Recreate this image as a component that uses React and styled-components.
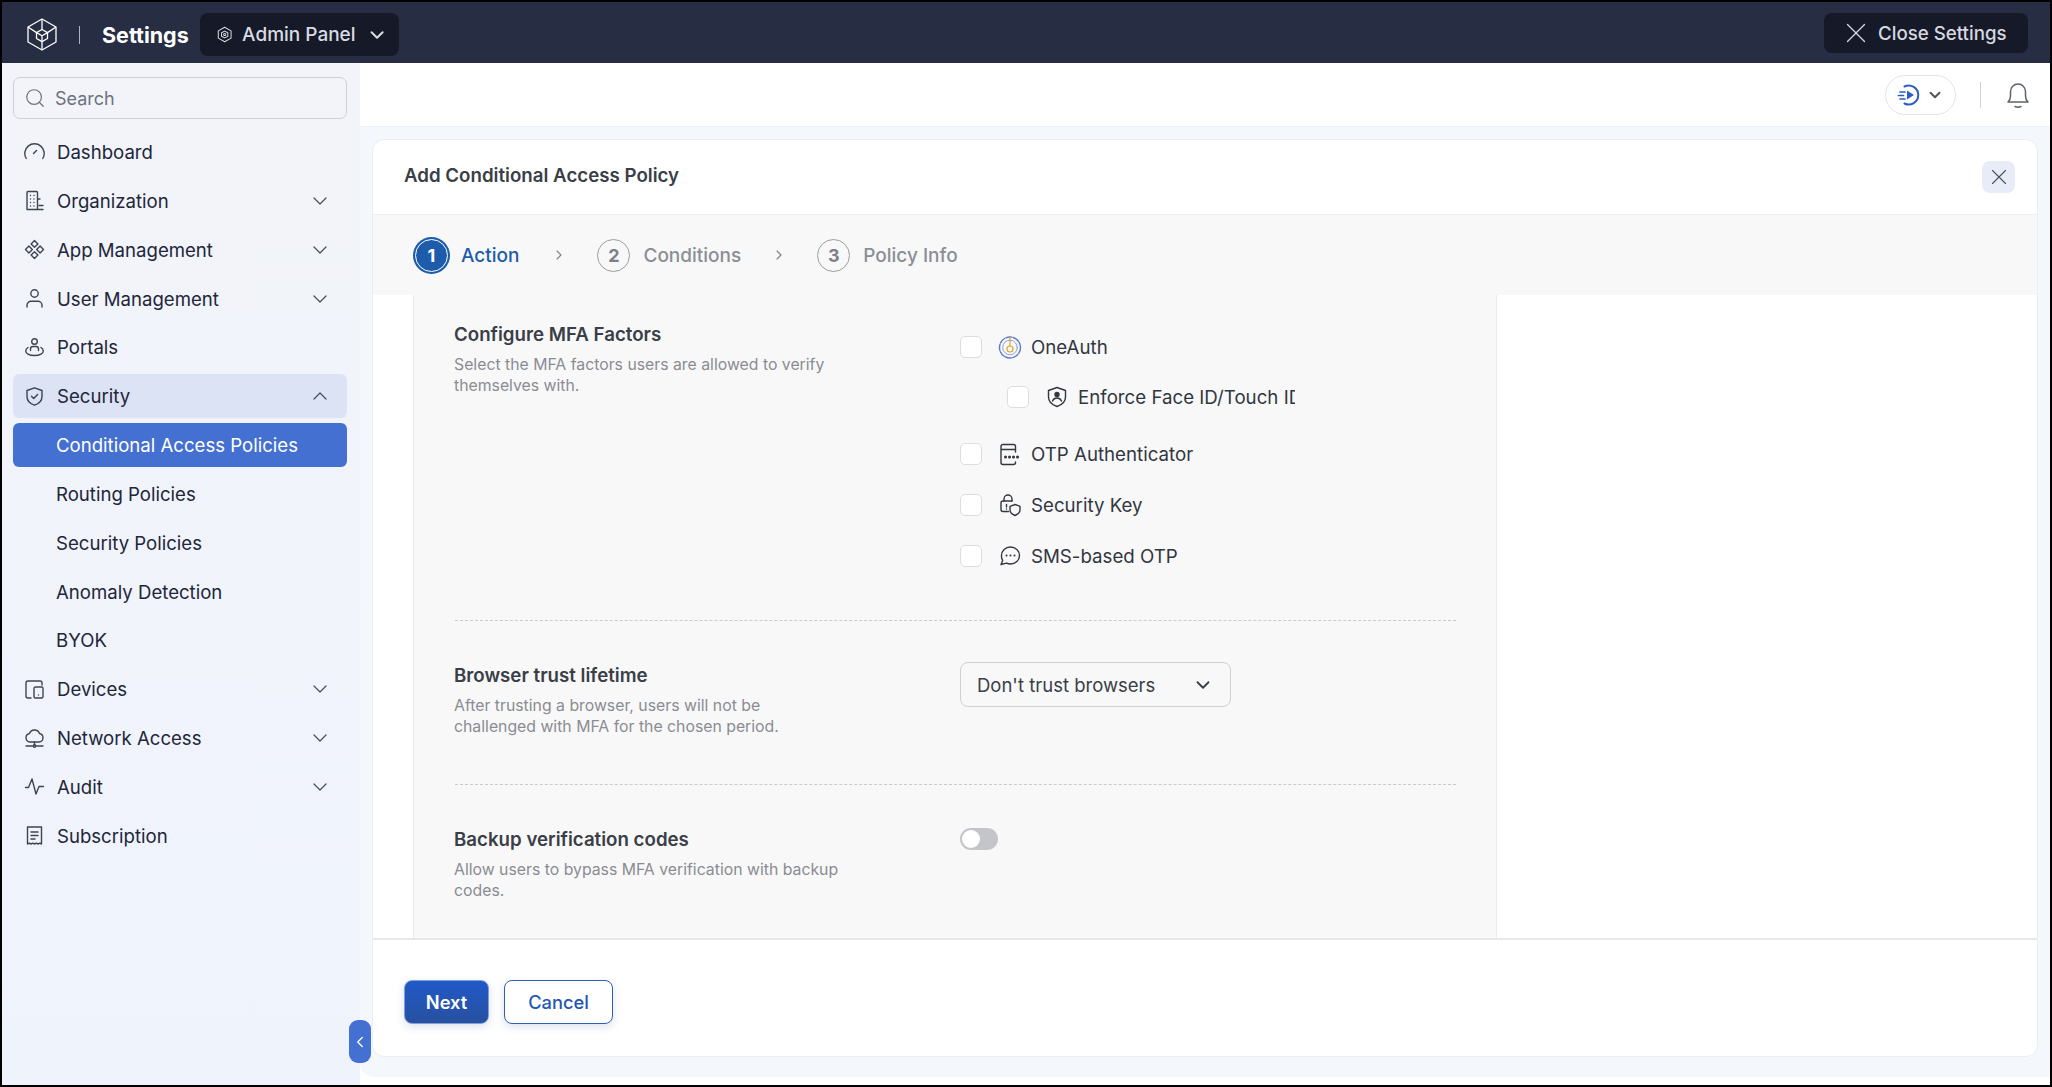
import styled, { createGlobalStyle } from "styled-components";
import { ChevronDown, ChevronUp, ChevronLeft, ChevronRight, Search as SearchGlyph, X } from "lucide-react";

const Global = createGlobalStyle`
  html, body { margin: 0; padding: 0; background: #000; }
  * { box-sizing: border-box; }
  body { font-family: Inter, "Noto Sans", sans-serif; }
`;

const Frame = styled.div`
  position: relative;
  width: 2052px;
  height: 1087px;
  border: 2px solid #000;
  background: #fff;
  display: flex;
  flex-direction: column;
  overflow: hidden;
`;

/* top bar */
const TopBar = styled.header`
  height: 61px;
  flex: none;
  background: #272d42;
  display: flex;
  justify-content: space-between;
  align-items: flex-start;
  padding: 11px 22px 0 25px;
`;
const Brand = styled.div`
  display: flex;
  align-items: center;
  height: 43px;
  color: #fff;
`;
const BrandDivider = styled.span`
  width: 1px;
  height: 18px;
  background: #aeb3c2;
  margin: 0 22px;
`;
const BrandTitle = styled.span`
  font-size: 21.5px;
  font-weight: 700;
  margin-right: 11px;
`;
const AdminPill = styled.div`
  width: 199px;
  height: 43px;
  background: #161927;
  border-radius: 8px;
  display: flex;
  align-items: center;
  padding: 0 11px 0 17px;
  gap: 10px;
  color: #d9dce4;
  font-size: 19px;
  font-weight: 500;
`;
const PillLabel = styled.span`
  flex: 1;
  white-space: nowrap;
`;
const ClosePill = styled.div`
  width: 204px;
  height: 40px;
  background: #161927;
  border-radius: 8px;
  display: flex;
  align-items: center;
  padding-left: 15px;
  gap: 5px;
  color: #d5d8e0;
  font-size: 18.7px;
  font-weight: 500;
  white-space: nowrap;
`;

const Body = styled.div`
  flex: 1;
  display: flex;
  min-height: 0;
`;

/* sidebar */
const Sidebar = styled.aside`
  width: 358px;
  flex: none;
  background: linear-gradient(#f2f4f9, #eff3fc);
  padding: 14px 13px 0 11px;
`;
const SearchBox = styled.div`
  height: 42px;
  border: 1.5px solid #cdd0d6;
  border-radius: 7px;
  display: flex;
  align-items: center;
  gap: 9px;
  padding-left: 10px;
  color: #6d7280;
  font-size: 18px;
  margin-bottom: 11px;
`;
const Nav = styled.nav`
  display: flex;
  flex-direction: column;
  gap: 4.85px;
`;
const NavItem = styled.div`
  height: 44px;
  border-radius: 6px;
  display: flex;
  align-items: center;
  gap: 12px;
  padding: 0 15px 0 11px;
  font-size: 18.6px;
  color: ${(p) => (p.$current ? "#fff" : "#21263a")};
  background: ${(p) => (p.$current ? "#4470d1" : p.$open ? "#dbe3f4" : "transparent")};
  padding-left: ${(p) => (p.$sub ? "43px" : "11px")};
  svg.caret { color: #4a4f5e; }
`;
const NavIcon = styled.svg`
  width: 21px;
  height: 21px;
  flex: none;
  fill: none;
  stroke: #3f4454;
  stroke-width: 1.4;
  stroke-linecap: round;
  stroke-linejoin: round;
`;
const NavLabel = styled.span`
  flex: 1;
  white-space: nowrap;
`;

/* main area */
const Main = styled.main`
  flex: 1;
  min-width: 0;
  display: flex;
  flex-direction: column;
`;
const SubBar = styled.div`
  height: 64px;
  flex: none;
  display: flex;
  align-items: center;
  justify-content: flex-end;
  padding-right: 20px;
  border-bottom: 1px solid #eef1f6;
`;
const RecordPill = styled.div`
  width: 71px;
  height: 40px;
  border: 1.5px solid #e2e4e8;
  border-radius: 20px;
  display: flex;
  align-items: center;
  justify-content: center;
  gap: 5px;
  color: #50545f;
`;
const SubDivider = styled.span`
  width: 1px;
  height: 26px;
  background: #cfd2d7;
  margin: 0 25px 0 24px;
`;
const Canvas = styled.div`
  height: 950px;
  flex: none;
  background: #f4f7fb;
  border-bottom-left-radius: 14px;
  padding: 12px 12px 20px 12px;
`;
const Card = styled.section`
  height: 918px;
  background: #fff;
  border: 1px solid #e9edf4;
  border-radius: 12px;
  display: flex;
  flex-direction: column;
  overflow: hidden;
`;
const CardHeader = styled.div`
  height: 75px;
  flex: none;
  display: flex;
  align-items: center;
  justify-content: space-between;
  padding: 0 22px 0 31px;
  border-bottom: 1px solid #eeeff1;
`;
const CardTitle = styled.h1`
  margin: 0 0 3px;
  font-size: 18.7px;
  font-weight: 600;
  color: #3a3e47;
`;
const IconButton = styled.button`
  width: 33px;
  height: 32px;
  border: 0;
  border-radius: 8px;
  background: #e8ecf8;
  color: #4b4f5a;
  display: flex;
  align-items: center;
  justify-content: center;
  padding: 0;
`;
const Stepper = styled.div`
  height: 80px;
  flex: none;
  background: #f8f8f9;
  display: flex;
  align-items: center;
  padding-left: 40px;
`;
const Step = styled.div`
  display: flex;
  align-items: center;
  gap: ${(p) => (p.$active ? "11px" : "13px")};
  margin-right: ${(p) => (p.$active ? "2px" : "0")};
  font-size: 19px;
  font-weight: 500;
  color: ${(p) => (p.$active ? "#1d5cab" : "#8b8e95")};
`;
const StepNumber = styled.span`
  width: 33px;
  height: 33px;
  border-radius: 50%;
  display: flex;
  align-items: center;
  justify-content: center;
  font-size: 18px;
  font-weight: 700;
  margin: ${(p) => (p.$active ? "0 2px" : "0")};
  color: ${(p) => (p.$active ? "#fff" : "#7d8087")};
  background: ${(p) => (p.$active ? "#1d5cab" : "transparent")};
  border: 1.5px solid ${(p) => (p.$active ? "#fff" : "#9a9da3")};
  box-shadow: ${(p) => (p.$active ? "0 0 0 2px #1d5cab" : "none")};
`;
const StepArrow = styled.span`
  width: 76px;
  display: flex;
  justify-content: center;
  color: #7d8087;
`;
const Scroller = styled.div`
  flex: 1;
  min-height: 0;
  overflow: hidden;
`;
const Panel = styled.div`
  margin-left: 40px;
  width: 1084px;
  height: 100%;
  background: #f8f8f9;
  border-left: 1px solid #ebebed;
  border-right: 1px solid #ebebed;
  padding: 0 40px 0 41px;
`;
const Section = styled.div`
  display: grid;
  grid-template-columns: 505px 1fr;
  padding: ${(p) => p.$top} 0 ${(p) => p.$bottom};
  border-bottom: ${(p) => (p.$last ? "0" : "1px dashed #c9cacc")};
`;
const SectionTitle = styled.h2`
  margin: 1px 0 7px -1px;
  font-size: 18.7px;
  line-height: 24px;
  font-weight: 600;
  color: #3a3e47;
`;
const SectionText = styled.p`
  margin: 0 0 0 -1px;
  width: 389px;
  font-size: 15.8px;
  line-height: 21px;
  color: #8a8c92;
`;
const Options = styled.div`
  display: flex;
  flex-direction: column;
  padding-top: 12px;
`;
const Option = styled.label`
  display: flex;
  align-items: center;
  height: 26px;
  margin-top: ${(p) => p.$gap || "0"};
  margin-left: ${(p) => (p.$nested ? "47px" : "0")};
  width: ${(p) => (p.$nested ? "288px" : "auto")};
  overflow: hidden;
  font-size: 18.7px;
  color: #32363f;
  white-space: nowrap;
`;
const Check = styled.span`
  width: 22px;
  height: 22px;
  flex: none;
  background: #fff;
  border: 1.5px solid #dcdde0;
  border-radius: 5px;
  margin-right: 16px;
`;
const OptionIcon = styled.svg`
  width: 24px;
  height: 24px;
  flex: none;
  margin-right: 9px;
  fill: none;
  stroke: #33373f;
  stroke-width: 1.4;
  stroke-linecap: round;
  stroke-linejoin: round;
`;
const Select = styled.div`
  width: 271px;
  height: 45px;
  margin-top: -1px;
  border: 1.5px solid #cfd0d3;
  border-radius: 8px;
  display: flex;
  align-items: center;
  justify-content: space-between;
  padding: 0 16px 0 16px;
  font-size: 18.5px;
  color: #3a3e47;
`;
const Toggle = styled.span`
  position: relative;
  display: block;
  width: 38px;
  height: 22px;
  margin-top: 1px;
  border-radius: 11px;
  background: #c3c5c8;
  &::after {
    content: "";
    position: absolute;
    left: 2px;
    top: 2px;
    width: 18px;
    height: 18px;
    border-radius: 50%;
    background: #fff;
  }
`;
const Footer = styled.div`
  height: 118px;
  flex: none;
  border-top: 2px solid #e8e8ea;
  display: flex;
  gap: 15px;
  padding: 40px 0 0 31px;
`;
const Button = styled.button`
  height: 44px;
  width: ${(p) => (p.$primary ? "85px" : "109px")};
  border-radius: 8px;
  font-family: inherit;
  font-size: 18.3px;
  font-weight: ${(p) => (p.$primary ? "600" : "500")};
  color: ${(p) => (p.$primary ? "#fff" : "#2556b5")};
  background: ${(p) => (p.$primary ? "linear-gradient(#2159c9, #27519f)" : "#fff")};
  border: 1.5px solid ${(p) => (p.$primary ? "#7fa0de" : "#2f5eb8")};
  box-shadow: 0 3px 8px rgba(60, 90, 160, 0.18);
`;
const CollapseHandle = styled.div`
  position: absolute;
  left: 347px;
  top: 1018px;
  width: 22px;
  height: 43px;
  border-radius: 9px;
  background: #4470d1;
  color: #fff;
  display: flex;
  align-items: center;
  justify-content: center;
`;

/* line icons */
const Gauge = () => (
  <NavIcon viewBox="0 0 21 21">
    <path d="M2.200 16.500A9.700 9.700 0 1 1 18.800 16.500" />
    <path d="M9.500 11.500l3-3" />
  </NavIcon>
);
const Building = () => (
  <NavIcon viewBox="0 0 21 21">
    <path d="M3 19.500V2.500a1 1 0 0 1 1-1h8.500a1 1 0 0 1 1 1v17H3zM13.500 9H16M13.500 19.500H19" />
    <path d="M6.500 5.500h.01M10 5.500h.01M6.500 9h.01M10 9h.01M6.500 12.500h.01M10 12.500h.01M6.500 16h.01M10 16h.01M15 15.500h4" />
  </NavIcon>
);
const Apps = () => (
  <NavIcon viewBox="0 0 21 21">
    <path d="M10.500 1.500l3.400 3.400-3.400 3.400-3.400-3.400zM10.500 12.700l3.400 3.400-3.400 3.400-3.400-3.400zM4.900 7.100l3.400 3.400-3.400 3.400-3.400-3.400zM16.100 7.100l3.400 3.400-3.400 3.400-3.400-3.400z" />
  </NavIcon>
);
const User = () => (
  <NavIcon viewBox="0 0 21 21">
    <circle cx="10.500" cy="5.500" r="3.700" />
    <path d="M3 19v-1.700a4 4 0 0 1 4-4h7a4 4 0 0 1 4 4V19" />
  </NavIcon>
);
const Portal = () => (
  <NavIcon viewBox="0 0 21 21">
    <circle cx="10.500" cy="4.500" r="2.800" />
    <path d="M6.500 13.500v-1.500a2.500 2.500 0 0 1 2.500-2.500h3a2.500 2.500 0 0 1 2.500 2.500v1.500" />
    <path d="M4 10.500c-3 2-3 5 0 6.600 3.500 1.900 9.500 1.900 13 0 3-1.600 3-4.600 0-6.600" />
  </NavIcon>
);
const Shield = () => (
  <NavIcon viewBox="0 0 21 21">
    <path d="M10.500 1.800l7.500 2.700v6c0 4.400-3.200 7.300-7.500 8.700C6.200 17.800 3 14.900 3 10.500v-6z" />
    <path d="M7.500 10.300l2.200 2.200 3.900-4" />
  </NavIcon>
);
const Device = () => (
  <NavIcon viewBox="0 0 21 21">
    <path d="M7 19H4a2 2 0 0 1-2-2V4a2 2 0 0 1 2-2h12a2 2 0 0 1 2 2v2" />
    <rect x="10" y="8" width="9" height="11" rx="1.500" />
    <path d="M14.500 16h.01" />
  </NavIcon>
);
const CloudNet = () => (
  <NavIcon viewBox="0 0 21 21">
    <path d="M6 14a4.300 4.300 0 0 1-.5-8.500 5.300 5.300 0 0 1 10 0A4.300 4.300 0 0 1 15 14z" />
    <path d="M10.500 14v3.500M2 18h6.500M12.500 18H19" />
    <circle cx="10.500" cy="18" r="1.200" />
  </NavIcon>
);
const Pulse = () => (
  <NavIcon viewBox="0 0 21 21">
    <path d="M1.500 11.500h3L8 3l4 15 3-7.500h4.500" />
  </NavIcon>
);
const Receipt = () => (
  <NavIcon viewBox="0 0 21 21">
    <path d="M3.500 2h14v17l-1.750-.8-1.750.8-1.750-.8-1.750.8-1.750-.8-1.750.8-1.750-.8-1.750.8z" />
    <path d="M7 7h7M7 10.500h7M7 14h4" />
  </NavIcon>
);

const Logo = () => (
  <svg width="30" height="33" viewBox="0 0 30 33" fill="none" stroke="#fff" strokeWidth="1.300" strokeLinejoin="round">
    <path d="M15 1l14 8v15l-14 8-14-8V9z" />
    <path d="M15 11.500l5.500 3.100v5.900L15 23.600l-5.500-3.100v-5.900z" />
    <path d="M9.500 14.600L15 17.700l5.500-3.100M15 17.700V32M1 9l8.500 5.600M29 9l-8.500 5.600M15 1v10.500" />
  </svg>
);
const PanelHex = () => (
  <svg width="18" height="19" viewBox="0 0 18 19" fill="none" stroke="#d9dce4" strokeWidth="1.200" strokeLinejoin="round">
    <path d="M9 1l7.500 4.200v8.600L9 18l-7.500-4.200V5.200z" />
    <path d="M9 5.500l3.700 2v4L9 13.500l-3.700-2v-4z" />
    <circle cx="9" cy="9.500" r="1.300" />
  </svg>
);
const RecordIcon = () => (
  <svg width="24" height="24" viewBox="0 0 24 24" fill="none" stroke="#2c5cc5" strokeWidth="2" strokeLinecap="round">
    <path d="M7.500 3.500A9.500 9.500 0 1 1 7.500 20.500" />
    <path d="M3 9h5M1.500 12.500h5M3 16h5" strokeWidth="1.700" />
    <path d="M10 7.500l7 4.500-7 4.500z" fill="#2c5cc5" stroke="none" />
  </svg>
);
const Bell = () => (
  <svg width="24" height="27" viewBox="0 -2 24 27" fill="none" stroke="#5d616c" strokeWidth="1.500" strokeLinecap="round" strokeLinejoin="round">
    <path d="M2 19c1.700-1.600 2.500-3.300 2.500-6V8.500a7.500 7.500 0 0 1 15 0V13c0 2.700.8 4.400 2.500 6z" />
    <path d="M9 23.500c1.800.8 4.200.8 6 0" />
  </svg>
);

const OneAuthIcon = () => (
  <OptionIcon viewBox="0 0 24 24">
    <circle cx="12" cy="12.500" r="10.500" stroke="#5b78cf" strokeDasharray="6 1.500" />
    <circle cx="12" cy="12.500" r="7.300" stroke="#8ea0dc" strokeWidth="1" />
    <circle cx="12" cy="14" r="3" stroke="#e0a52f" strokeWidth="1.200" />
    <path d="M12 11V2.500" stroke="#e0a52f" strokeWidth="1.200" />
  </OptionIcon>
);
const FaceIcon = () => (
  <OptionIcon viewBox="0 0 24 24">
    <path d="M12 2.500l8.500 3v6.500c0 4.500-3.500 7.800-8.500 9.500-5-1.700-8.500-5-8.500-9.500V5.500z" />
    <circle cx="12" cy="9.500" r="2" fill="#33373f" />
    <path d="M7.500 16c1-2.300 2.500-3 4.500-3s3.500.7 4.500 3" />
  </OptionIcon>
);
const OtpIcon = () => (
  <OptionIcon viewBox="0 0 24 24">
    <path d="M17.500 10V4.500a2 2 0 0 0-2-2H5a2 2 0 0 0-2 2v16a2 2 0 0 0 2 2h10.500a2 2 0 0 0 2-2V20M3 7.500h14.500" />
    <path d="M7.500 15h.01M11.500 15h.01M15.500 15h.01M19.500 15h.01" strokeWidth="3" />
  </OptionIcon>
);
const KeyIcon = () => (
  <OptionIcon viewBox="0 0 24 24">
    <path d="M10.500 18.500H5a2 2 0 0 1-2-2V10a2 2 0 0 1 2-2h9" />
    <path d="M6 8V6a4 4 0 0 1 8 0v2M8.500 11.500v2.500M8.500 16v.01" />
    <path d="M17 11.500l5 1.800v3.500c0 2.700-2 4.500-5 5.700-3-1.200-5-3-5-5.700v-3.500z" />
  </OptionIcon>
);
const ChatIcon = () => (
  <OptionIcon viewBox="0 0 24 24">
    <path d="M12.500 3c5 0 9 3.700 9 8.500S17.500 20 12.500 20c-1.500 0-2.800-.3-4-.9L3 20.500l1.700-4A8.300 8.300 0 0 1 3.500 11.500C3.500 6.700 7.500 3 12.500 3z" />
    <path d="M8.500 11.500h.01M12.500 11.500h.01M16.500 11.500h.01" strokeWidth="2" />
  </OptionIcon>
);

const Caret = () => <ChevronDown className="caret" size={24} strokeWidth={1.3} />;

const App = () => {
  return (
    <Frame>
      <Global />
      <TopBar>
        <Brand>
          <Logo />
          <BrandDivider />
          <BrandTitle>Settings</BrandTitle>
          <AdminPill>
            <PanelHex />
            <PillLabel>Admin Panel</PillLabel>
            <ChevronDown size={26} strokeWidth={2.2} />
          </AdminPill>
        </Brand>
        <ClosePill>
          <X size={34} strokeWidth={0.9} />
          Close Settings
        </ClosePill>
      </TopBar>
      <Body>
        <Sidebar>
          <SearchBox>
            <SearchGlyph size={22} strokeWidth={1.3} />
            Search
          </SearchBox>
          <Nav>
            <NavItem><Gauge /><NavLabel>Dashboard</NavLabel></NavItem>
            <NavItem><Building /><NavLabel>Organization</NavLabel><Caret /></NavItem>
            <NavItem><Apps /><NavLabel>App Management</NavLabel><Caret /></NavItem>
            <NavItem><User /><NavLabel>User Management</NavLabel><Caret /></NavItem>
            <NavItem><Portal /><NavLabel>Portals</NavLabel></NavItem>
            <NavItem $open><Shield /><NavLabel>Security</NavLabel><ChevronUp className="caret" size={24} strokeWidth={1.3} /></NavItem>
            <NavItem $sub $current><NavLabel>Conditional Access Policies</NavLabel></NavItem>
            <NavItem $sub><NavLabel>Routing Policies</NavLabel></NavItem>
            <NavItem $sub><NavLabel>Security Policies</NavLabel></NavItem>
            <NavItem $sub><NavLabel>Anomaly Detection</NavLabel></NavItem>
            <NavItem $sub><NavLabel>BYOK</NavLabel></NavItem>
            <NavItem><Device /><NavLabel>Devices</NavLabel><Caret /></NavItem>
            <NavItem><CloudNet /><NavLabel>Network Access</NavLabel><Caret /></NavItem>
            <NavItem><Pulse /><NavLabel>Audit</NavLabel><Caret /></NavItem>
            <NavItem><Receipt /><NavLabel>Subscription</NavLabel></NavItem>
          </Nav>
        </Sidebar>
        <Main>
          <SubBar>
            <RecordPill>
              <RecordIcon />
              <ChevronDown size={18} strokeWidth={2.6} />
            </RecordPill>
            <SubDivider />
            <Bell />
          </SubBar>
          <Canvas>
            <Card>
              <CardHeader>
                <CardTitle>Add Conditional Access Policy</CardTitle>
                <IconButton><X size={26} strokeWidth={1} /></IconButton>
              </CardHeader>
              <Stepper>
                <Step $active>
                  <StepNumber $active>1</StepNumber>
                  Action
                </Step>
                <StepArrow><ChevronRight size={16} strokeWidth={1.6} /></StepArrow>
                <Step>
                  <StepNumber>2</StepNumber>
                  Conditions
                </Step>
                <StepArrow><ChevronRight size={16} strokeWidth={1.6} /></StepArrow>
                <Step>
                  <StepNumber>3</StepNumber>
                  Policy Info
                </Step>
              </Stepper>
              <Scroller>
                <Panel>
                  <Section $top="27px" $bottom="51px">
                    <div>
                      <SectionTitle>Configure MFA Factors</SectionTitle>
                      <SectionText>Select the MFA factors users are allowed to verify themselves with.</SectionText>
                    </div>
                    <Options>
                      <Option><Check /><OneAuthIcon />OneAuth</Option>
                      <Option $nested $gap="24px"><Check /><FaceIcon />Enforce Face ID/Touch ID</Option>
                      <Option $gap="31px"><Check /><OtpIcon />OTP Authenticator</Option>
                      <Option $gap="25px"><Check /><KeyIcon />Security Key</Option>
                      <Option $gap="25px"><Check /><ChatIcon />SMS-based OTP</Option>
                    </Options>
                  </Section>
                  <Section $top="42px" $bottom="47px">
                    <div>
                      <SectionTitle>Browser trust lifetime</SectionTitle>
                      <SectionText>After trusting a browser, users will not be challenged with MFA for the chosen period.</SectionText>
                    </div>
                    <Select>
                      Don't trust browsers
                      <ChevronDown size={22} strokeWidth={2} />
                    </Select>
                  </Section>
                  <Section $top="42px" $bottom="30px" $last>
                    <div>
                      <SectionTitle>Backup verification codes</SectionTitle>
                      <SectionText>Allow users to bypass MFA verification with backup codes.</SectionText>
                    </div>
                    <div><Toggle /></div>
                  </Section>
                </Panel>
              </Scroller>
              <Footer>
                <Button $primary>Next</Button>
                <Button>Cancel</Button>
              </Footer>
            </Card>
          </Canvas>
        </Main>
      </Body>
      <CollapseHandle><ChevronLeft size={18} strokeWidth={1.8} /></CollapseHandle>
    </Frame>
  );
};

export default App;
